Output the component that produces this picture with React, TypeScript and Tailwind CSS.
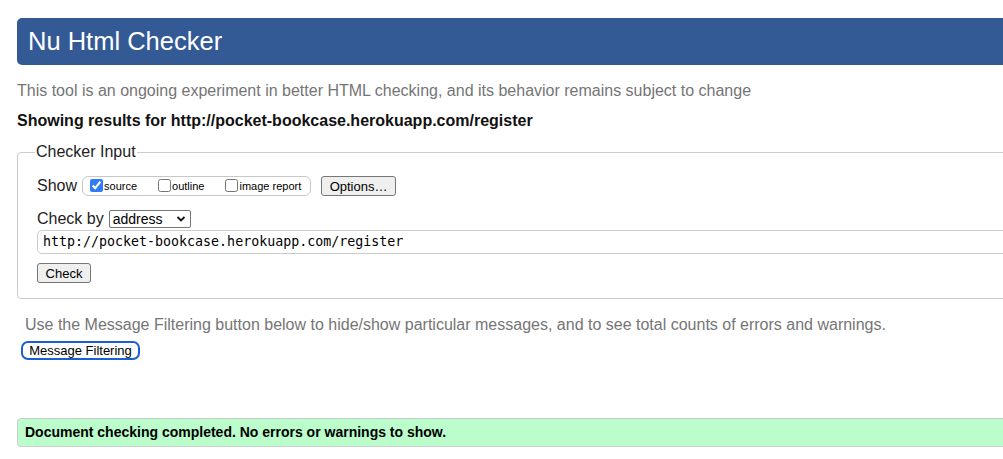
import React from "react"

const sans = { fontFamily: '"Liberation Sans", Arial, sans-serif' }

function Checkbox({ label, checked }: { label: string; checked?: boolean }) {
  return (
    <label className="flex items-center gap-[1px]">
      <input
        type="checkbox"
        defaultChecked={checked}
        className="m-0 mb-[2px] h-[13px] w-[13px] accent-[#2f7cf6]"
      />
      <span className="text-[11px] text-black leading-none">{label}</span>
    </label>
  )
}

export default function App() {
  return (
    <div className="w-[1003px] h-[459px] overflow-hidden bg-white" style={sans}>
      <div className="w-[1100px] pl-[17px] pt-[18px]">
        <header className="h-[47px] rounded-l-[5px] bg-[#335a95] flex items-center pl-[11px]">
          <h1 className="text-[25.5px] text-white leading-none">Nu Html Checker</h1>
        </header>

        <p className="mt-[17px] text-[16px] text-[#757575] leading-[18px]">
          This tool is an ongoing experiment in better HTML checking, and its behavior remains subject to change
        </p>
        <p className="mt-[12px] text-[16px] font-bold text-[#111] leading-[18px]">
          Showing results for http://pocket-bookcase.herokuapp.com/register
        </p>

        <fieldset className="mt-[13px] border border-[#cccccc] rounded-l-[4px] pl-[19px] pr-0 pt-0 pb-[13px]">
          <legend className="ml-[-2px] px-[1px] text-[16px] text-[#222] leading-[18px]">Checker Input</legend>

          <div className="mt-[15px] flex items-center h-[20px]">
            <span className="text-[16px] text-[#222]">Show</span>
            <div className="ml-[5px] h-[20px] w-[229px] border border-[#c8c8c8] rounded-[6px] flex items-center pl-[7px] gap-[21px]">
              <Checkbox label="source" checked />
              <Checkbox label="outline" />
              <Checkbox label="image report" />
            </div>
            <button className="ml-[10px] h-[20px] w-[75px] border border-[#767676] rounded-[3px] bg-[#efefef] text-[13px] text-black leading-none">
              Options…
            </button>
          </div>

          <div className="mt-[13px] flex items-center h-[20px]">
            <span className="text-[16px] text-[#222]">Check by</span>
            <div className="ml-[5px] relative h-[18px] w-[82px] border border-[#767676] rounded-[2px] bg-white flex items-center pl-[3px]">
              <span className="text-[14px] text-black leading-none">address</span>
              <svg className="absolute right-[4px] top-[4px]" width="10" height="8" viewBox="0 0 10 8">
                <path d="M1.5 2 L5 5.5 L8.5 2" fill="none" stroke="#111" strokeWidth="1.8" />
              </svg>
            </div>
          </div>

          <div className="mt-[1px] h-[24px] border border-[#cccccc] rounded-l-[5px] flex items-center pl-[5px]">
            <span
              className="text-[13.3px] text-black leading-none"
              style={{ fontFamily: '"DejaVu Sans Mono", monospace' }}
            >
              http://pocket-bookcase.herokuapp.com/register
            </span>
          </div>

          <button className="mt-[9px] h-[20px] w-[54px] border border-[#767676] rounded-[3px] bg-[#efefef] text-[13px] text-black leading-none">
            Check
          </button>
        </fieldset>

        <p className="mt-[17px] ml-[8px] text-[16px] text-[#757575] leading-[17px]">
          Use the Message Filtering button below to hide/show particular messages, and to see total counts of errors and warnings.
        </p>
        <button className="mt-[8px] ml-[4px] h-[19px] w-[119px] border-2 border-[#1c5fd1] rounded-[7px] bg-white text-[13px] text-black leading-none">
          Message Filtering
        </button>

        <div className="mt-[56px] h-[29px] border border-[#cccccc] rounded-l-[4px] bg-[#bbfdcb] flex items-center pl-[7px]">
          <span className="text-[14px] font-bold text-black">
            Document checking completed. No errors or warnings to show.
          </span>
        </div>
      </div>
    </div>
  )
}
